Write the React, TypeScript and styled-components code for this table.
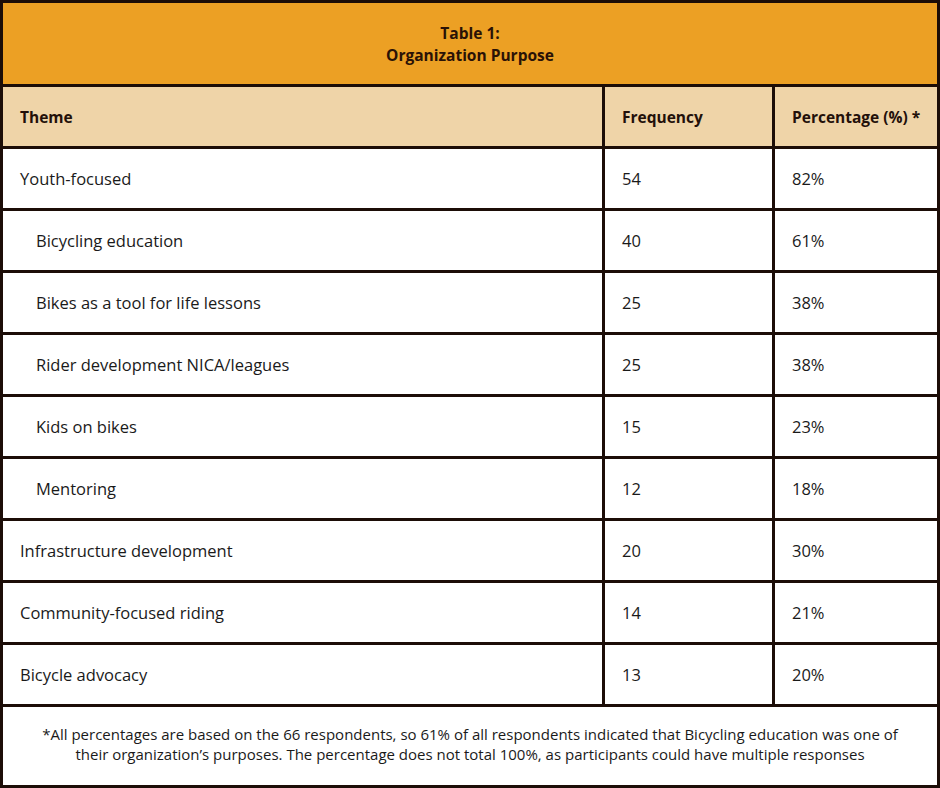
import React from 'react';
import styled, { createGlobalStyle } from 'styled-components';

interface Row {
  theme: string;
  frequency: number;
  percentage: string;
  sub?: boolean;
}

const rows: Row[] = [
  { theme: 'Youth-focused', frequency: 54, percentage: '82%' },
  { theme: 'Bicycling education', frequency: 40, percentage: '61%', sub: true },
  { theme: 'Bikes as a tool for life lessons', frequency: 25, percentage: '38%', sub: true },
  { theme: 'Rider development NICA/leagues', frequency: 25, percentage: '38%', sub: true },
  { theme: 'Kids on bikes', frequency: 15, percentage: '23%', sub: true },
  { theme: 'Mentoring', frequency: 12, percentage: '18%', sub: true },
  { theme: 'Infrastructure development', frequency: 20, percentage: '30%' },
  { theme: 'Community-focused riding', frequency: 14, percentage: '21%' },
  { theme: 'Bicycle advocacy', frequency: 13, percentage: '20%' },
];

const App: React.FC = () => {
  return (
    <>
      <GlobalStyle />
      <Frame>
        <Title>
          <span>Table 1:</span>
          <span>Organization Purpose</span>
        </Title>
        <Line>
          <HeadCell>Theme</HeadCell>
          <HeadCell>Frequency</HeadCell>
          <HeadCell>Percentage (%) *</HeadCell>
        </Line>
        {rows.map((row) => (
          <Line key={row.theme}>
            <Cell $indent={row.sub}>{row.theme}</Cell>
            <Cell>{row.frequency}</Cell>
            <Cell>{row.percentage}</Cell>
          </Line>
        ))}
        <Footer>
          *All percentages are based on the 66 respondents, so 61% of all respondents indicated that
          Bicycling education was one of their organization’s purposes. The percentage does not total
          100%, as participants could have multiple responses
        </Footer>
      </Frame>
    </>
  );
};

export default App;

const GlobalStyle = createGlobalStyle`
  body {
    margin: 0;
    background: #ffffff;
    font-family: 'Open Sans', 'Noto Sans', sans-serif;
  }
`;

const Frame = styled.div`
  width: 940px;
  height: 788px;
  box-sizing: border-box;
  padding: 3px;
  background: #1c0d07;
  display: grid;
  grid-template-rows: 81px 59px repeat(9, 59px) 1fr;
  gap: 3px;
`;

const Title = styled.div`
  background: #eca024;
  display: flex;
  flex-direction: column;
  align-items: center;
  justify-content: center;
  gap: 1px;
  padding-top: 2px;
  font-size: 15.5px;
  font-weight: 700;
  color: #2a1206;
  line-height: 21px;
`;

const Line = styled.div`
  display: grid;
  grid-template-columns: 599px 167px 1fr;
  gap: 3px;
`;

const HeadCell = styled.div`
  background: #efd4a8;
  display: flex;
  align-items: center;
  padding: 0 2px 0 17px;
  white-space: nowrap;
  font-size: 15.5px;
  font-weight: 700;
  color: #23100a;
`;

const Cell = styled.div<{ $indent?: boolean }>`
  background: #ffffff;
  display: flex;
  align-items: center;
  padding: 0 17px 0 ${(p) => (p.$indent ? '33px' : '17px')};
  font-size: 16.5px;
  color: #1a1a1a;
`;

const Footer = styled.div`
  background: #ffffff;
  display: flex;
  align-items: center;
  justify-content: center;
  text-align: center;
  padding: 0 34px 4px;
  font-size: 15px;
  line-height: 20px;
  color: #1a1a1a;
`;
